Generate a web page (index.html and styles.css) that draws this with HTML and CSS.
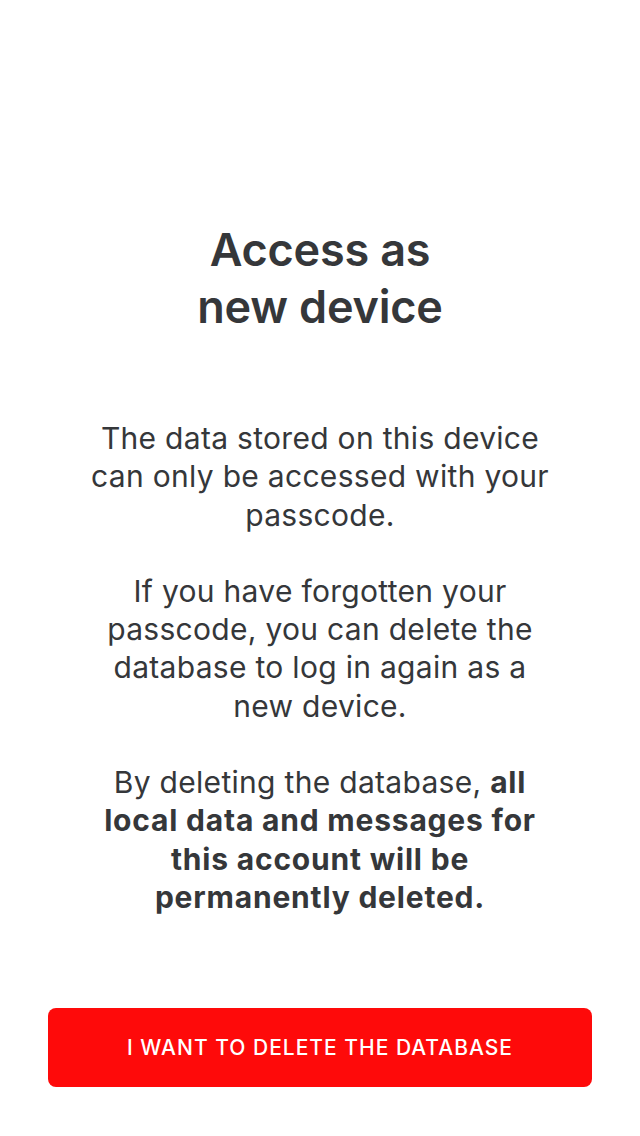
FILE: index.html
```html
<!DOCTYPE html>
<html>
<head>
<meta charset="utf-8">
<link rel="stylesheet" href="styles.css">
</head>
<body>
<main class="screen">
  <h1 class="title">Access as<br>new device</h1>
  <div class="content">
    <p>The data stored on this device can only be accessed with your passcode.</p>
    <p>If you have forgotten your passcode, you can delete the database to log in again as a new device.</p>
    <p>By deleting the database, <strong>all local data and messages for this account will be permanently deleted.</strong></p>
  </div>
  <button class="danger">I WANT TO DELETE THE DATABASE</button>
</main>
</body>
</html>
```
FILE: styles.css
```css
html, body {
  margin: 0;
  padding: 0;
  background: #ffffff;
}
.screen {
  box-sizing: border-box;
  width: 640px;
  height: 1136px;
  display: flex;
  flex-direction: column;
  align-items: center;
  padding: 221px 48px 49px;
  font-family: Inter, "Noto Sans", sans-serif;
  color: #35373a;
}
.title {
  margin: 0;
  font-size: 45px;
  font-weight: 600;
  line-height: 57px;
  text-align: center;
  letter-spacing: -0.2px;
}
.content {
  width: 468px;
  margin-top: 84px;
  text-align: center;
  font-size: 30px;
  line-height: 38.3px;
  font-weight: 400;
  letter-spacing: 0.3px;
}
.content p {
  margin: 0 0 38px;
}
.content p:last-child {
  margin-bottom: 0;
}
.content strong {
  font-weight: 700;
  letter-spacing: 0.8px;
}
.danger {
  margin-top: auto;
  width: 544px;
  height: 79px;
  border: 0;
  border-radius: 8px;
  background: #fe0a0a;
  color: #ffffff;
  font-family: Inter, "Noto Sans", sans-serif;
  font-size: 21px;
  font-weight: 500;
  letter-spacing: 1px;
}
```
